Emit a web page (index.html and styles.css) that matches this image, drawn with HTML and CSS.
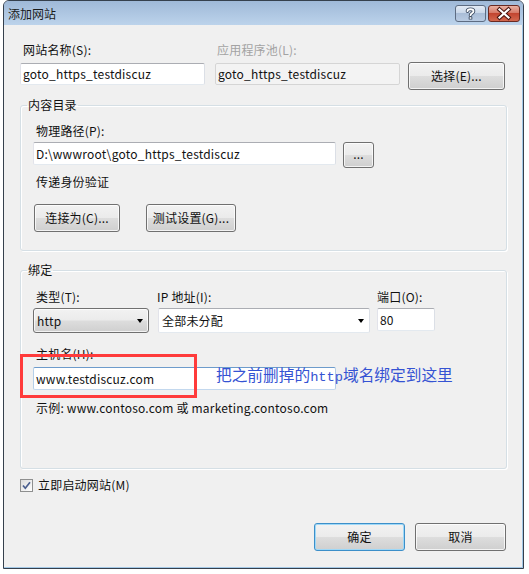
FILE: index.html
```html
<!DOCTYPE html>
<html lang="zh-CN">
<head>
<meta charset="utf-8">
<title>添加网站</title>
<link rel="stylesheet" href="styles.css">
</head>
<body>
<div class="window">
  <div class="titlebar">
    <span class="title">添加网站</span>
    <div class="caption-btns">
      <span class="cap cap-help">
        <svg width="29" height="15" viewBox="0 0 29 15">
          <path d="M11.5 5.2 C11.5 2.6 17.5 2.6 17.5 5.2 C17.5 7.2 14.5 7.2 14.5 9.2" fill="none" stroke="#3b4a60" stroke-width="3.6" stroke-linecap="round"/>
          <path d="M11.5 5.2 C11.5 2.6 17.5 2.6 17.5 5.2 C17.5 7.2 14.5 7.2 14.5 9.2" fill="none" stroke="#fff" stroke-width="1.8" stroke-linecap="round"/>
          <rect x="12.7" y="10.4" width="3.6" height="3.2" rx="0.6" fill="#3b4a60"/>
          <rect x="13.6" y="11.2" width="1.8" height="1.6" fill="#fff"/>
        </svg>
      </span>
      <span class="cap cap-close">
        <svg width="30" height="15" viewBox="0 0 30 15">
          <path d="M10.5 3.5 L19.5 11.5 M19.5 3.5 L10.5 11.5" stroke="#4a1510" stroke-width="4.2" stroke-linecap="square"/>
          <path d="M10.5 3.5 L19.5 11.5 M19.5 3.5 L10.5 11.5" stroke="#fff" stroke-width="2.2" stroke-linecap="square"/>
        </svg>
      </span>
    </div>
  </div>

  <div class="client">
    <div class="top-row">
      <div class="field f-name">
        <div class="lbl">网站名称(S):</div>
        <div class="textbox tb-name">goto_https_testdiscuz</div>
      </div>
      <div class="field f-pool">
        <div class="lbl lbl-disabled">应用程序池(L):</div>
        <div class="textbox tb-pool">goto_https_testdiscuz</div>
      </div>
      <div class="btn btn-select">选择(E)...</div>
    </div>

    <fieldset class="group g-content">
      <legend>内容目录</legend>
      <div class="lbl lbl-path">物理路径(P):</div>
      <div class="path-row">
        <div class="textbox tb-path">D:\wwwroot\goto_https_testdiscuz</div>
        <div class="btn btn-browse">...</div>
      </div>
      <div class="lbl lbl-auth">传递身份验证</div>
      <div class="auth-btns">
        <div class="btn btn-connect">连接为(C)...</div>
        <div class="btn btn-test">测试设置(G)...</div>
      </div>
    </fieldset>

    <fieldset class="group g-binding">
      <legend>绑定</legend>
      <div class="binding-row">
        <div class="field f-type">
          <div class="lbl lbl-type">类型(T):</div>
          <div class="combo combo-btn">http<span class="arrow"></span></div>
        </div>
        <div class="field f-ip">
          <div class="lbl lbl-ip">IP 地址(I):</div>
          <div class="combo combo-white">全部未分配<span class="arrow"></span></div>
        </div>
        <div class="field f-port">
          <div class="lbl lbl-port">端口(O):</div>
          <div class="textbox tb-port">80</div>
        </div>
      </div>
      <div class="host">
        <div class="lbl lbl-host">主机名(H):</div>
        <div class="textbox tb-host">www.testdiscuz.com</div>
        <div class="red-mark"></div>
        <div class="note">把之前删掉的<span class="note-mono">http</span>域名绑定到这里</div>
      </div>
      <div class="lbl lbl-example">示例: www.contoso.com 或 marketing.contoso.com</div>
    </fieldset>

    <div class="check-row">
      <span class="checkbox">
        <svg width="13" height="13" viewBox="0 0 13 13">
          <path d="M3 6.5 L5.3 9.2 L10 3.2" fill="none" stroke="#4a5e8e" stroke-width="1.7"/>
        </svg>
      </span>
      <span class="check-label">立即启动网站(M)</span>
    </div>

    <div class="footer">
      <div class="btn btn-ok">确定</div>
      <div class="btn btn-cancel">取消</div>
    </div>
  </div>
</div>
</body>
</html>
```

FILE: styles.css
```css
* { box-sizing: border-box; }

body {
  margin: 0;
  background: #ffffff;
  font-family: "Noto Sans CJK SC", "Noto Sans", sans-serif;
  font-size: 12px;
  line-height: 16px;
  color: #111;
}

.window {
  margin-left: 3px;
  width: 521px;
  height: 569px;
  border: 1px solid #35404d;
  border-radius: 6px 6px 0 0;
  display: flex;
  flex-direction: column;
  overflow: hidden;
  background: #bcd2ea;
}

.titlebar {
  height: 24px;
  flex: none;
  display: flex;
  justify-content: space-between;
  align-items: flex-start;
  background: linear-gradient(#9fb9d8, #bcd3eb);
}

.title {
  padding: 5px 0 0 4px;
  color: #1b1b1b;
}

.caption-btns {
  display: flex;
  gap: 2px;
  padding: 4px 3px 0 0;
}

.cap {
  display: block;
  height: 17px;
  border-radius: 3px;
  border: 1px solid #5d6c82;
}

.cap svg { display: block; }

.cap-help {
  width: 31px;
  background: linear-gradient(#e3ebf5 0%, #c9d7e9 45%, #a9bdd7 50%, #b9cbe2 100%);
}

.cap-close {
  width: 32px;
  border-color: #6a2a22;
  background: linear-gradient(#eab1a2 0%, #d67a68 45%, #c24530 50%, #d3684f 100%);
}

.client {
  flex: 1;
  background: #f0f0f0;
  padding: 17px 15px 16px 16px;
  border-right: 1px solid #a3c8e6;
  border-bottom: 1px solid #a3c8e6;
  display: flex;
  flex-direction: column;
  letter-spacing: 0.2px;
}

.lbl {
  height: 16px;
  white-space: nowrap;
}

.lbl-disabled { color: #a3a3a3; }

.textbox {
  background: #fff;
  border: 1px solid;
  border-color: #abadb3 #dbdfe6 #e3e9ef #e2e3ea;
  border-radius: 2px;
  padding: 0 2px;
  white-space: nowrap;
  overflow: hidden;
}

.btn {
  display: flex;
  align-items: center;
  justify-content: center;
  border: 1px solid #707070;
  border-radius: 3px;
  background: linear-gradient(#f2f2f2 0%, #ebebeb 49%, #dddddd 51%, #cfcfcf 100%);
  box-shadow: inset 0 0 0 1px rgba(255, 255, 255, 0.75);
  color: #111;
  white-space: nowrap;
}

/* top row */
.top-row {
  display: flex;
  align-items: flex-start;
  height: 48px;
}

.f-name { width: 185px; }
.f-name .lbl { margin-left: 3px; }

.f-pool { width: 185px; margin-left: 10px; }
.f-pool .lbl { margin-left: 2px; }

.tb-name, .tb-pool {
  margin-top: 5px;
  height: 22px;
  line-height: 20px;
}

.tb-pool {
  background: #f3f3f3;
  border-color: #d5d5d5;
}

.btn-select {
  margin-left: 8px;
  margin-top: 20px;
  width: 97px;
  height: 28px;
}

/* group boxes */
.group {
  margin: 0;
  padding: 0 12px 18px;
  min-width: 0;
  border: 1px solid #d5dfe5;
  border-radius: 3px;
  box-shadow: inset 1px 1px 0 #fff, 1px 1px 0 #fff;
}

.group legend {
  margin-left: -6px;
  padding: 0 1px;
  line-height: 16px;
}

.g-content { margin-top: 7px; }

.lbl-path { margin-top: 10px; margin-left: 3px; }

.path-row {
  display: flex;
  align-items: flex-start;
  margin-top: 3px;
}

.tb-path {
  width: 303px;
  height: 23px;
  line-height: 21px;
}

.btn-browse {
  margin-left: 7px;
  width: 31px;
  height: 26px;
  padding-bottom: 3px;
}

.lbl-auth { margin-top: 6px; margin-left: 3px; }

.auth-btns {
  display: flex;
  margin-top: 14px;
}

.btn-connect { margin-left: 1px; width: 86px; height: 28px; }
.btn-test { margin-left: 26px; width: 90px; height: 28px; }

/* binding */
.g-binding { margin-top: 11px; padding-bottom: 52px; }

.binding-row {
  display: flex;
  align-items: flex-start;
  margin-top: 11px;
}

.f-type { width: 116px; }
.f-ip { width: 212px; margin-left: 9px; }
.f-port { width: 58px; margin-left: 7px; }

.lbl-type { margin-left: 3px; }
.lbl-ip { margin-left: -1px; }

.combo {
  position: relative;
  margin-top: 3px;
  height: 25px;
  line-height: 23px;
  padding-left: 3px;
  border-radius: 3px;
}

.combo-btn {
  border: 1px solid #707070;
  background: linear-gradient(#f2f2f2 0%, #ebebeb 49%, #dddddd 51%, #cfcfcf 100%);
  box-shadow: inset 0 0 0 1px rgba(255, 255, 255, 0.75);
}

.combo-white {
  background: #fff;
  border: 1px solid;
  border-color: #abadb3 #dbdfe6 #e3e9ef #e2e3ea;
  border-radius: 2px;
}

.arrow {
  position: absolute;
  right: 5px;
  top: 10px;
  width: 0;
  height: 0;
  border-left: 3.5px solid transparent;
  border-right: 3.5px solid transparent;
  border-top: 4px solid #000;
}

.tb-port {
  margin-top: 3px;
  height: 23px;
  line-height: 21px;
}

.host {
  position: relative;
  margin-top: 13px;
}

.lbl-host { margin-left: 3px; }

.tb-host {
  margin-top: 5px;
  width: 303px;
  height: 23px;
  line-height: 21px;
  border-color: #6d9bcb #b5cfe8 #c3d8ee #b5cfe8;
}

.red-mark {
  position: absolute;
  left: -13px;
  top: 8px;
  width: 177px;
  height: 44px;
  border: 3px solid #ff3b3b;
}

.note {
  position: absolute;
  left: 183px;
  top: 19px;
  font-size: 15.7px;
  line-height: 20px;
  letter-spacing: 0;
  color: #3553d3;
  white-space: nowrap;
}

.note-mono {
  font-family: "Liberation Mono", "DejaVu Sans Mono", monospace;
  font-size: 13.7px;
}

.lbl-example { margin-top: 10px; margin-left: 3px; }

/* checkbox */
.check-row {
  display: flex;
  align-items: center;
  height: 16px;
  margin-top: 8px;
}

.checkbox {
  display: block;
  width: 13px;
  height: 13px;
  border: 1px solid #8e8f8f;
  background: linear-gradient(135deg, #dcdcdc, #ffffff);
}

.checkbox svg {
  display: block;
  margin: -1px 0 0 -1px;
}

.check-label { margin-left: 5px; }

/* footer */
.footer {
  margin-top: auto;
  display: flex;
  justify-content: flex-end;
  gap: 10px;
  padding-right: 1px;
}

.btn-ok {
  width: 91px;
  height: 28px;
  border-color: #3c8fc9;
  box-shadow: inset 0 0 0 1px #9fd8f7;
}

.btn-cancel {
  width: 91px;
  height: 28px;
}
```
